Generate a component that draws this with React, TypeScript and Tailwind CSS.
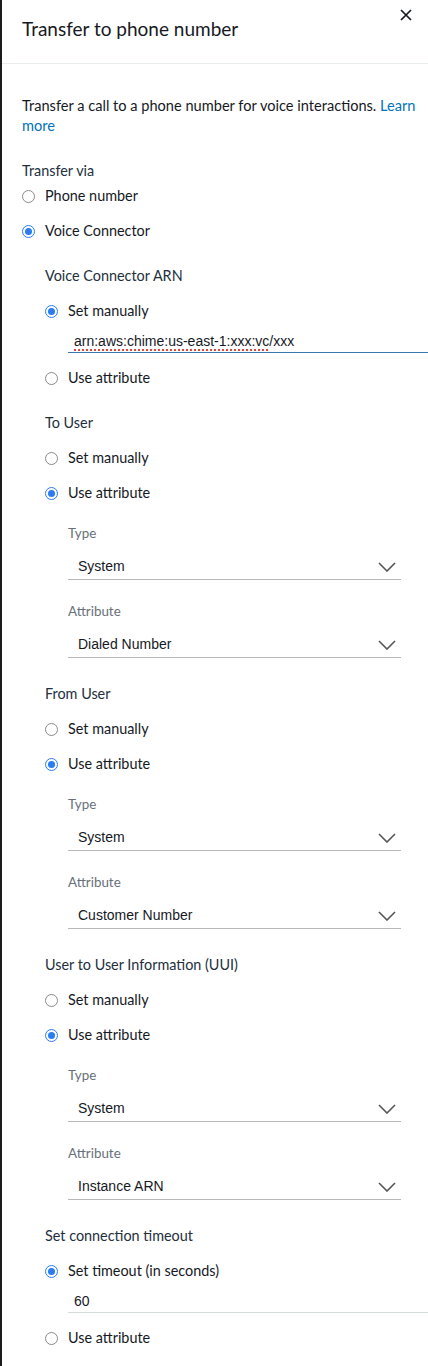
import React from "react"

const ui = { fontFamily: "Lato, 'Noto Sans', sans-serif" }
const field = { fontFamily: "'Liberation Sans', Arial, sans-serif" }

const Radio = ({ checked }: { checked?: boolean }): JSX.Element =>
  checked ? (
    <span className="flex h-[13px] w-[13px] shrink-0 items-center justify-center rounded-full border-[1.5px] border-[#2b7cf0] bg-white">
      <span className="h-[7px] w-[7px] rounded-full bg-[#2b7cf0]" />
    </span>
  ) : (
    <span className="h-[13px] w-[13px] shrink-0 rounded-full border border-[#8a8a8a] bg-white" />
  )

interface RowProps {
  label: string
  checked?: boolean
  className?: string
}

const RadioRow = ({ label, checked, className }: RowProps): JSX.Element => (
  <div className={`flex h-[20px] items-center gap-[10px] text-[14.4px] text-[#16191f] ${className ?? ""}`}>
    <Radio checked={checked} />
    <span>{label}</span>
  </div>
)

const Label = ({ children, className }: { children: React.ReactNode; className?: string }) => (
  <div className={`flex h-[20px] items-center text-[14.4px] text-[#232f3e] ${className ?? ""}`}>
    {children}
  </div>
)

const Chevron = () => (
  <svg width="18" height="10" viewBox="0 0 18 10" fill="none" className="mr-[5px]">
    <path d="M1 1l8 8 8-8" stroke="#555" strokeWidth="1.6" />
  </svg>
)

const Select = ({ label, value, className }: { label: string; value: string; className?: string }) => (
  <div className={className}>
    <div className="flex h-[20px] items-center text-[13.4px] text-[#687078]">{label}</div>
    <div
      className="mt-[11px] flex h-[26px] items-center justify-between border-b border-[#b8b8b8] pl-[10px] text-[14px] text-[#16191f]"
      style={field}
    >
      <span>{value}</span>
      <Chevron />
    </div>
  </div>
)

const AttributeBlock = ({ value }: { value: string }) => (
  <div className="ml-[23px] w-[333px]">
    <Select label="Type" value="System" className="mt-[20px]" />
    <Select label="Attribute" value={value} className="mt-[21px]" />
  </div>
)

const UserSection = ({ label, value }: { label: string; value: string }) => (
  <div className="mt-[26px]">
    <Label>{label}</Label>
    <RadioRow label="Set manually" className="mt-[15px]" />
    <RadioRow label="Use attribute" checked className="mt-[15px]" />
    <AttributeBlock value={value} />
  </div>
)

const App = (): JSX.Element => {
  return (
    <div className="min-h-[1366px] w-[428px] border-l-2 border-[#1b1b1b] bg-white" style={ui}>
      <div className="relative flex h-[64px] items-center border-b border-[#eaeded] pl-[20px]">
        <h1 className="-mt-[4px] text-[19px] text-[#16191f]">Transfer to phone number</h1>
        <button className="absolute right-[14px] top-[7px] p-[2px]" aria-label="Close">
          <svg width="12" height="12" viewBox="0 0 12 12">
            <path d="M1 1l10 10M11 1L1 11" stroke="#16191f" strokeWidth="1.7" />
          </svg>
        </button>
      </div>

      <div className="pl-[20px]">
        <p className="mt-[32px] pr-[8px] text-[14.6px] leading-[20px] text-[#16191f]">
          Transfer a call to a phone number for voice interactions. <a className="text-[#0073bb]">Learn</a>{" "}
          <a className="text-[#0073bb]">more</a>
        </p>

        <Label className="mt-[25px]">Transfer via</Label>
        <RadioRow label="Phone number" className="mt-[5px]" />
        <RadioRow label="Voice Connector" checked className="mt-[15px]" />

        <div className="pl-[23px]">
          <Label className="mt-[25px]">Voice Connector ARN</Label>
          <RadioRow label="Set manually" checked className="mt-[15px]" />
          <div
            className="ml-[23px] mt-[10px] flex h-[22px] items-center border-b border-[#3a76b0] pl-[6px] text-[14px] text-[#16191f]"
            style={field}
          >
            <span className="underline decoration-[#e0463c] decoration-dotted decoration-2 underline-offset-[3px]">
              arn:aws:chime:us-east-1:xxx:vc
            </span>
            <span>/xxx</span>
          </div>
          <RadioRow label="Use attribute" className="mt-[15px]" />

          <div className="mt-[25px]">
            <Label>To User</Label>
            <RadioRow label="Set manually" className="mt-[15px]" />
            <RadioRow label="Use attribute" checked className="mt-[15px]" />
            <AttributeBlock value="Dialed Number" />
          </div>

          <UserSection label="From User" value="Customer Number" />
          <UserSection label="User to User Information (UUI)" value="Instance ARN" />

          <div className="mt-[26px]">
            <Label>Set connection timeout</Label>
            <RadioRow label="Set timeout (in seconds)" checked className="mt-[15px]" />
            <div
              className="ml-[23px] mt-[10px] flex h-[22px] items-center border-b border-[#d5dbdb] pl-[6px] text-[14px] text-[#16191f]"
              style={field}
            >
              60
            </div>
            <RadioRow label="Use attribute" className="mt-[15px]" />
          </div>
        </div>
      </div>
    </div>
  )
}

export default App
